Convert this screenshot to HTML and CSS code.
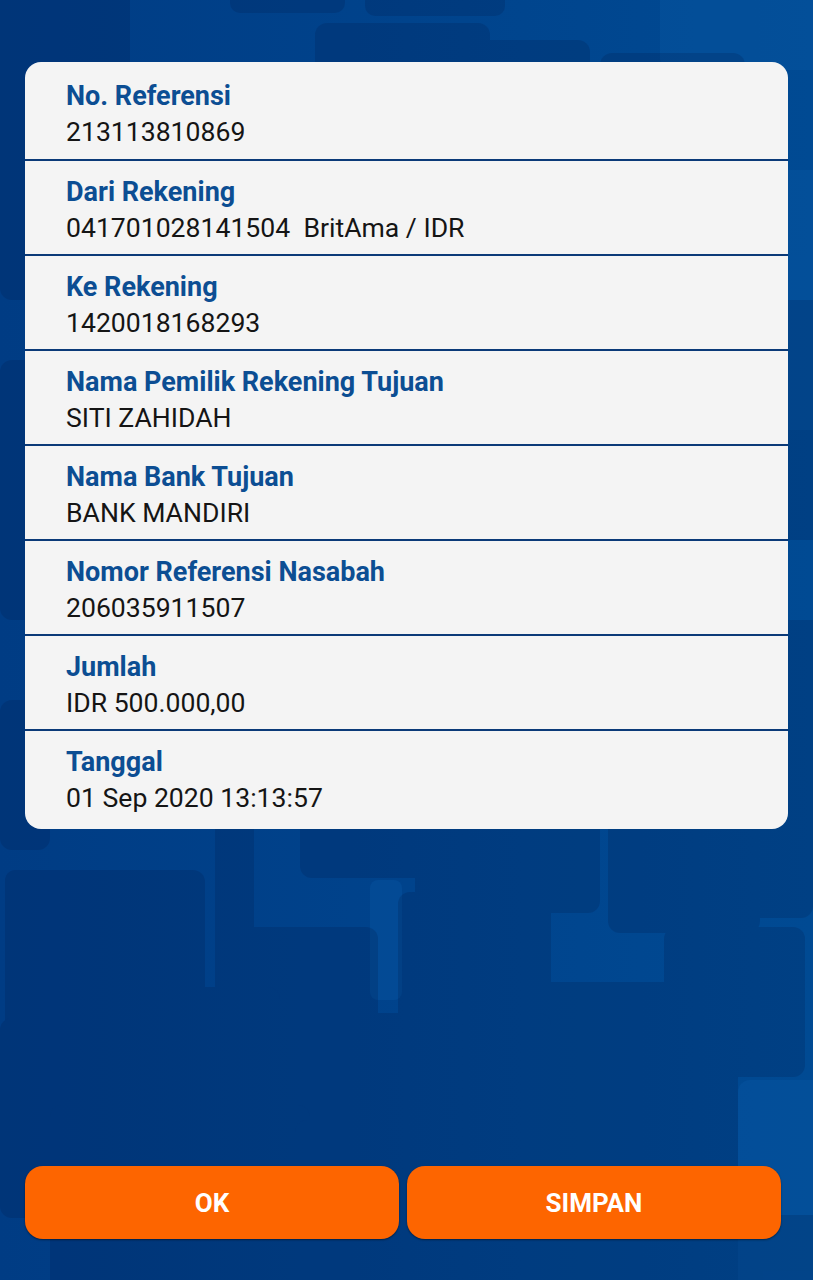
FILE: index.html
```html
<!DOCTYPE html>
<html lang="id">
<head>
<meta charset="utf-8">
<title>Detail Transaksi</title>
<link rel="stylesheet" href="styles.css">
</head>
<body>
<div class="screen">
  <svg class="bg" viewBox="0 0 813 1280" width="813" height="1280" aria-hidden="true">
    <defs>
      <linearGradient id="base" x1="0" y1="0" x2="1" y2="0">
        <stop offset="0" stop-color="#003c84"/>
        <stop offset="0.5" stop-color="#00438c"/>
        <stop offset="1" stop-color="#004a93"/>
      </linearGradient>
    </defs>
    <rect x="0" y="0" width="813" height="1280" fill="url(#base)"/>
    <g fill="#0a5aa5" opacity="0.35">
      <rect x="660" y="-20" width="170" height="90" rx="12"/>
      <rect x="738" y="1080" width="90" height="220" rx="12"/>
      <rect x="370" y="880" width="32" height="120" rx="8"/>
      <rect x="690" y="170" width="140" height="260" rx="12"/>
    </g>
    <g fill="#001a4a" opacity="0.2">
      <rect x="0" y="-20" width="130" height="320" rx="12"/>
      <rect x="230" y="-20" width="115" height="33" rx="10"/>
      <rect x="365" y="-20" width="140" height="36" rx="10"/>
      <rect x="315" y="23" width="175" height="120" rx="12"/>
      <rect x="470" y="40" width="120" height="100" rx="12"/>
      <rect x="600" y="53" width="145" height="100" rx="12"/>
      <rect x="0" y="360" width="60" height="260" rx="12"/>
      <rect x="760" y="300" width="80" height="240" rx="12"/>
      <rect x="0" y="700" width="50" height="150" rx="12"/>
      <rect x="740" y="620" width="90" height="200" rx="12"/>
      <rect x="5" y="870" width="200" height="210" rx="12"/>
      <rect x="5" y="870" width="39" height="173" rx="10"/>
      <rect x="215" y="780" width="39" height="175" rx="10"/>
      <rect x="300" y="780" width="150" height="98" rx="12"/>
      <rect x="215" y="927" width="163" height="175" rx="12"/>
      <rect x="115" y="987" width="165" height="260" rx="12"/>
      <rect x="0" y="1018" width="125" height="200" rx="12"/>
      <rect x="398" y="892" width="153" height="163" rx="12"/>
      <rect x="415" y="780" width="185" height="133" rx="12"/>
      <rect x="475" y="982" width="263" height="320" rx="12"/>
      <rect x="608" y="780" width="152" height="153" rx="12"/>
      <rect x="664" y="927" width="141" height="150" rx="12"/>
      <rect x="725" y="780" width="88" height="138" rx="12"/>
      <rect x="365" y="1013" width="186" height="300" rx="12"/>
      <rect x="237" y="1050" width="141" height="250" rx="12"/>
      <rect x="50" y="1105" width="260" height="200" rx="12"/>
      <rect x="295" y="1120" width="152" height="200" rx="12"/>
      <rect x="630" y="1215" width="200" height="100" rx="12"/>
    </g>
  </svg>

  <main class="content">
    <section class="card">
      <div class="row first">
        <div class="label">No. Referensi</div>
        <div class="value">213113810869</div>
      </div>
      <div class="row">
        <div class="label">Dari Rekening</div>
        <div class="value">041701028141504  BritAma / IDR</div>
      </div>
      <div class="row">
        <div class="label">Ke Rekening</div>
        <div class="value">1420018168293</div>
      </div>
      <div class="row">
        <div class="label">Nama Pemilik Rekening Tujuan</div>
        <div class="value">SITI ZAHIDAH</div>
      </div>
      <div class="row">
        <div class="label">Nama Bank Tujuan</div>
        <div class="value">BANK MANDIRI</div>
      </div>
      <div class="row">
        <div class="label">Nomor Referensi Nasabah</div>
        <div class="value">206035911507</div>
      </div>
      <div class="row">
        <div class="label">Jumlah</div>
        <div class="value">IDR 500.000,00</div>
      </div>
      <div class="row last">
        <div class="label">Tanggal</div>
        <div class="value">01 Sep 2020 13:13:57</div>
      </div>
    </section>

    <div class="spacer"></div>

    <div class="actions">
      <button class="btn" type="button">OK</button>
      <button class="btn" type="button">SIMPAN</button>
    </div>
  </main>
</div>
</body>
</html>
```

FILE: styles.css
```css
html, body {
  margin: 0;
  padding: 0;
}

body {
  width: 813px;
  height: 1280px;
  overflow: hidden;
  font-family: Roboto, "Noto Sans", "Liberation Sans", sans-serif;
  background: #00438c;
}

.screen {
  display: grid;
  width: 813px;
  height: 1280px;
}

.bg {
  grid-area: 1 / 1;
  display: block;
}

.content {
  grid-area: 1 / 1;
  display: flex;
  flex-direction: column;
  padding: 62px 0 41px 25px;
  box-sizing: border-box;
  height: 1280px;
}

.card {
  width: 763px;
  background: #f4f4f4;
  border-radius: 16px;
  padding: 3px 0 0;
  box-sizing: border-box;
  overflow: hidden;
}

.row {
  padding: 13px 0 8px 41px;
  border-bottom: 2px solid #0b3a78;
}

.row.first {
  padding-bottom: 9px;
}

.row.last {
  border-bottom: none;
  padding-bottom: 13px;
}

.label {
  font-size: 27px;
  line-height: 36px;
  font-weight: 700;
  color: #0c4e93;
}

.value {
  font-size: 26.6px;
  line-height: 36px;
  font-weight: 400;
  color: #151515;
  white-space: pre;
}

.spacer {
  flex: 1;
}

.actions {
  display: flex;
  gap: 8px;
}

.btn {
  width: 374px;
  height: 73px;
  border: none;
  border-radius: 18px;
  background: #fd6500;
  color: #ffffff;
  font-family: Roboto, "Noto Sans", "Liberation Sans", sans-serif;
  font-size: 26px;
  font-weight: 700;
  box-shadow: 0 1px 2px rgba(0, 0, 0, 0.45);
  padding: 0;
}
```
